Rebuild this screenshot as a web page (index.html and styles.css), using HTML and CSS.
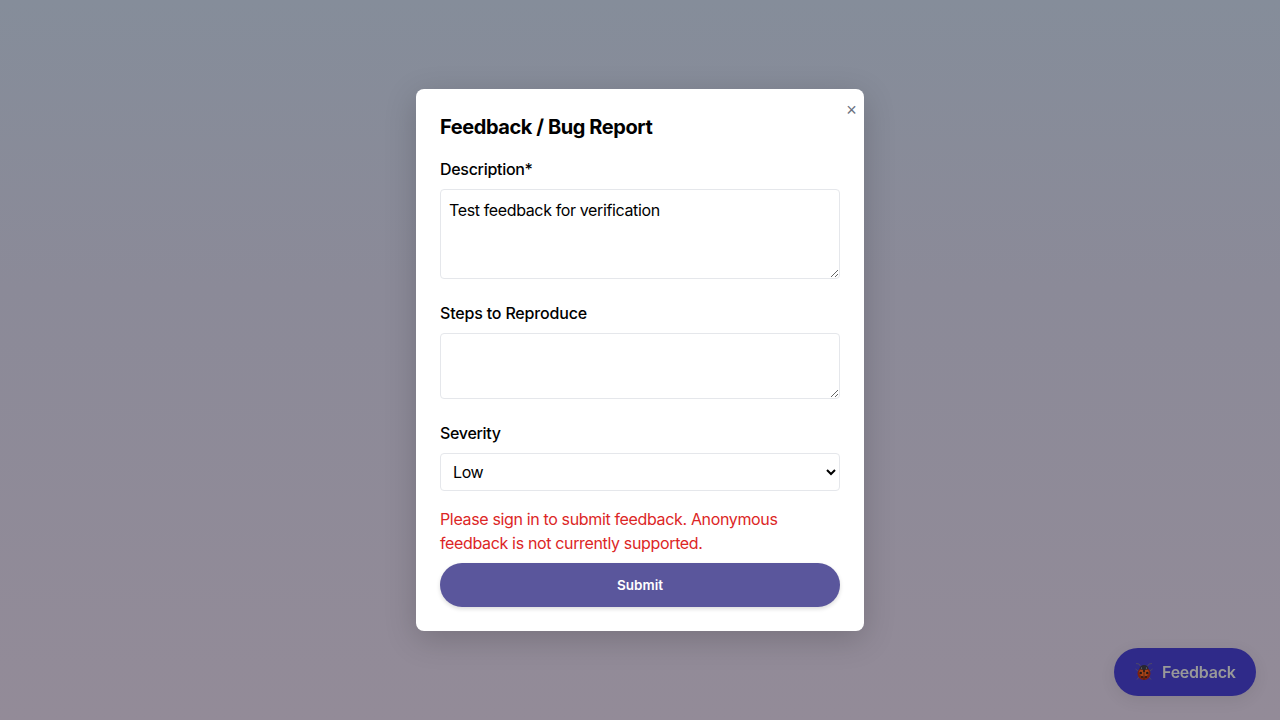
FILE: index.html
```html
<!DOCTYPE html>
<html lang="en">
<head>
<meta charset="utf-8">
<title>Feedback / Bug Report</title>
<link rel="stylesheet" href="styles.css">
</head>
<body>
<button class="feedback-button" type="button">
<svg class="bug" viewBox="0 0 20 20" aria-hidden="true">
<path d="M7 5 5 2 2 1.500M13 5l2-3 3-.5M4 9 1.500 7M16 9l2.500-2M5 15l-2 2.500M15 15l2 2.500" stroke="#504b65" stroke-width=".9" fill="none"/>
<circle cx="10" cy="11.500" r="6.500" fill="#7e210e"/>
<ellipse cx="10" cy="10.500" rx="5" ry="4" fill="#a84417"/>
<path d="M5.500 7a4.500 4 0 0 1 9 0q-4.500 2-9 0" fill="#292731"/>
<path d="M10 7v11" stroke="#392016" stroke-width=".7"/>
<circle cx="6.700" cy="11" r="1.300" fill="#251b17"/><circle cx="13.300" cy="11" r="1.300" fill="#251b17"/><circle cx="8" cy="15" r="1" fill="#251b17"/><circle cx="12" cy="15" r="1" fill="#251b17"/><circle cx="10" cy="9" r="1.100" fill="#251b17"/>
<circle cx="7.500" cy="6" r=".6" fill="#8e8c8d"/><circle cx="12.500" cy="6" r=".6" fill="#8e8c8d"/>
</svg>
<span>Feedback</span>
</button>
<div class="overlay">
<form class="dialog">
<button class="close" type="button" aria-label="Close">×</button>
<h2 class="title">Feedback / Bug Report</h2>
<label class="label" for="description">Description*</label>
<textarea class="field description" id="description">Test feedback for verification</textarea>
<label class="label label-steps" for="steps">Steps to Reproduce</label>
<textarea class="field steps" id="steps"></textarea>
<label class="label" for="severity">Severity</label>
<select class="field severity" id="severity"><option>Low</option><option>Medium</option><option>High</option></select>
<p class="error">Please sign in to submit feedback. Anonymous feedback is not currently supported.</p>
<button class="submit" type="button">Submit</button>
</form>
</div>
</body>
</html>
```
FILE: styles.css
```css
* { box-sizing: border-box; }
body { margin: 0; height: 100vh; overflow: hidden; font: 16px/24px Inter, sans-serif; color: #000; }
button, textarea, select { font: inherit; }
.overlay { position: fixed; inset: 0; display: flex; align-items: center; justify-content: center; background: linear-gradient(#858d9a, #8b8a98 40%, #938b98); }
.dialog { position: relative; display: flex; flex-direction: column; width: 448px; height: 542px; padding: 24px; border-radius: 8px; background: #fff; box-shadow: 0 8px 32px rgba(0,0,0,.18); }
.close { position: absolute; top: 9px; right: 8px; padding: 0; border: 0; background: none; color: #6b7280; font-family: "Liberation Sans", sans-serif; font-size: 18px; line-height: 24px; width: 9px; display: flex; justify-content: center; }
.title { margin: 0 0 16px; font-size: 20px; line-height: 28px; font-weight: 700; letter-spacing: -.42px; }
.label { margin-bottom: 8px; font-weight: 500; letter-spacing: -.3px; }
.label-steps { letter-spacing: -.18px; }
.field { display: block; width: 100%; margin: 0 0 22px; border: 1px solid #e5e7eb; border-radius: 4px; padding: 8px; background: #fff; color: #000; letter-spacing: -.37px; }
.description { height: 90px; }
.steps { height: 66px; }
.severity { height: 38px; margin-bottom: 16px; padding-top: 7px; }
.error { margin: 0 0 8px; color: #dc2626; letter-spacing: -.35px; }
.submit { height: 44px; border: 0; border-radius: 22px; background: #5a569c; color: #fff; font-size: 13.500px; font-weight: 600; box-shadow: 0 2px 4px rgba(0,0,0,.14); }
.feedback-button { position: fixed; z-index: 2; right: 24px; bottom: 24px; display: flex; align-items: center; gap: 8px; width: 142px; height: 48px; padding: 0 20px; border: 0; border-radius: 24px; background: #2f2a89; color: #999; font-weight: 600; letter-spacing: -.25px; box-shadow: 0 4px 16px rgba(0,0,0,.08); }
.bug { flex: none; width: 20px; height: 20px; }
```
